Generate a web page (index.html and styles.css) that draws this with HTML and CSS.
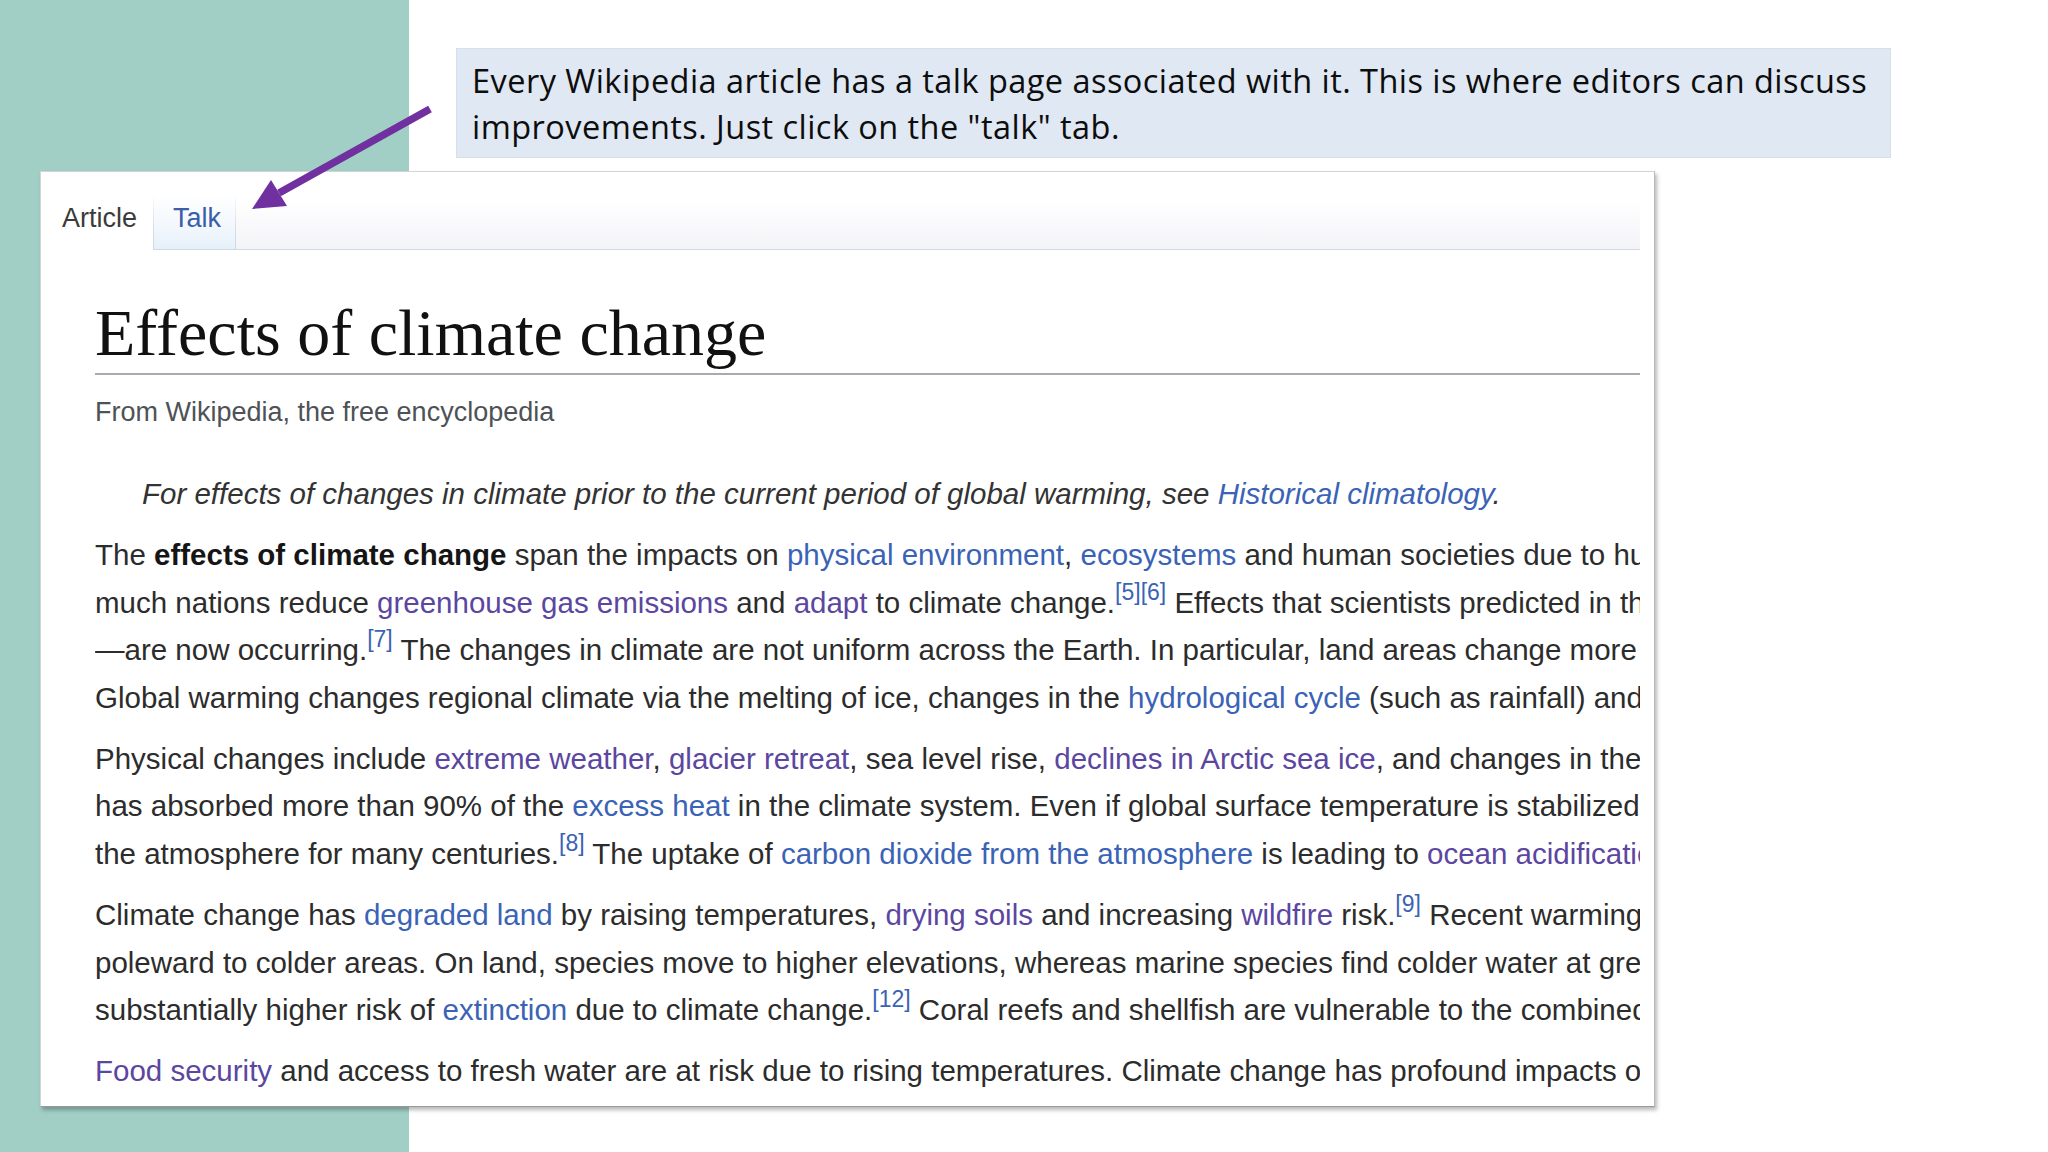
FILE: index.html
```html
<!DOCTYPE html>
<html lang="en">
<head>
<meta charset="utf-8">
<title>Talk pages</title>
<link rel="stylesheet" href="styles.css">
</head>
<body>
<div class="slide">
  <div class="callout">
    <p class="callout-text">Every Wikipedia article has a talk page associated with it. This is where editors can discuss<br>improvements. Just click on the "talk" tab.</p>
  </div>

  <div class="shot">
    <div class="tabs">
      <span class="tab tab-article">Article</span>
      <span class="tab tab-talk">Talk</span>
      <span class="tab-fill"></span>
    </div>
    <div class="content">
      <h1 class="title">Effects of climate change</h1>
      <div class="sitesub">From Wikipedia, the free encyclopedia</div>
      <div class="hatnote">For effects of changes in climate prior to the current period of global warming, see <a class="lk">Historical climatology</a>.</div>

      <p class="para">
        <span class="ln">The <b>effects of climate change</b> span the impacts on <a class="lk">physical environment</a>, <a class="lk">ecosystems</a> and human societies due to human-caused climate change. The future</span>
        <span class="ln">much nations reduce <a class="vl">greenhouse gas emissions</a> and <a class="vl">adapt</a> to climate change.<sup class="ref">[5]</sup><sup class="ref">[6]</sup> Effects that scientists predicted in the past—loss of sea ice,</span>
        <span class="ln">—are now occurring.<sup class="ref">[7]</sup> The changes in climate are not uniform across the Earth. In particular, land areas change more quickly</span>
        <span class="ln">Global warming changes regional climate via the melting of ice, changes in the <a class="lk">hydrological cycle</a> (such as rainfall) and changes</span>
      </p>

      <p class="para">
        <span class="ln">Physical changes include <a class="vl">extreme weather</a>, <a class="vl">glacier retreat</a>, sea level rise, <a class="vl">declines in Arctic sea ice</a>, and changes in the timing</span>
        <span class="ln">has absorbed more than 90% of the <a class="lk">excess heat</a> in the climate system. Even if global surface temperature is stabilized, sea</span>
        <span class="ln">the atmosphere for many centuries.<sup class="ref">[8]</sup> The uptake of <a class="lk">carbon dioxide from the atmosphere</a> is leading to <a class="vl">ocean acidification</a>.</span>
      </p>

      <p class="para">
        <span class="ln">Climate change has <a class="lk">degraded land</a> by raising temperatures, <a class="vl">drying soils</a> and increasing <a class="vl">wildfire</a> risk.<sup class="ref">[9]</sup> Recent warming has</span>
        <span class="ln">poleward to colder areas. On land, species move to higher elevations, whereas marine species find colder water at greater depths.</span>
        <span class="ln">substantially higher risk of <a class="lk">extinction</a> due to climate change.<sup class="ref">[12]</sup> Coral reefs and shellfish are vulnerable to the combined effects</span>
      </p>

      <p class="para">
        <span class="ln"><a class="vl">Food security</a> and access to fresh water are at risk due to rising temperatures. Climate change has profound impacts on</span>
      </p>
    </div>
  </div>

  <svg class="arrow" width="2048" height="1152" viewBox="0 0 2048 1152" aria-hidden="true">
    <line x1="430" y1="109" x2="279" y2="193" stroke="#7030a0" stroke-width="7.5" stroke-linecap="butt"/>
    <polygon points="252,209 271,180 287,206" fill="#7030a0"/>
  </svg>
</div>
</body>
</html>
```

FILE: styles.css
```css
html, body {
  margin: 0;
  padding: 0;
}

body {
  width: 2048px;
  height: 1152px;
  overflow: hidden;
  font-family: "Liberation Sans", Arial, sans-serif;
  background: linear-gradient(to right, #a1cfc6 0, #a1cfc6 409px, #ffffff 409px, #ffffff 100%);
}

.slide {
  position: relative;
  width: 2048px;
  height: 1152px;
  padding-top: 48px;
  box-sizing: border-box;
  display: flex;
  flex-direction: column;
  align-items: flex-start;
}

/* ---------- callout ---------- */
.callout {
  margin-left: 456px;
  width: 1435px;
  height: 110px;
  box-sizing: border-box;
  background: #dfe8f3;
  border: 1px solid #d6e0eb;
  padding: 9px 0 0 15px;
}

.callout-text {
  margin: 0;
  font-family: "Open Sans", "Liberation Sans", sans-serif;
  font-size: 32.5px;
  letter-spacing: 0.45px;
  line-height: 46px;
  color: #0d0d0d;
  white-space: nowrap;
}

/* ---------- wikipedia screenshot ---------- */
.shot {
  margin-top: 13px;
  margin-left: 40px;
  width: 1615px;
  height: 936px;
  box-sizing: border-box;
  background: #ffffff;
  border: 1px solid #d4d4d4;
  border-right-color: #b9b9b9;
  border-bottom-color: #9a9a9a;
  box-shadow: 2px 3px 4px rgba(0, 0, 0, 0.28);
  overflow: hidden;
  display: flex;
  flex-direction: column;
}

.tabs {
  height: 78px;
  margin: 0 14px 0 10px;
  display: flex;
  align-items: flex-end;
  font-size: 27px;
}

.tab {
  display: block;
  height: 55px;
  box-sizing: border-box;
  line-height: 46px;
  white-space: nowrap;
}

.tab-article {
  padding: 0 16px 0 11px;
  color: #3b3b3b;
}

.tab-talk {
  padding: 0 14px 0 19px;
  color: #3a5ea8;
  background: linear-gradient(to bottom, #ffffff 0%, #f3f8fd 55%, #e6f0fa 100%);
  border-style: solid;
  border-width: 0 1px 1px 1px;
  border-image: linear-gradient(to bottom, rgba(200, 214, 230, 0) 0%, #d3deea 60%, #cfd9e5 100%) 1;
}

.tab-fill {
  flex: 1;
  height: 50px;
  box-sizing: border-box;
  background: linear-gradient(to bottom, #ffffff 0%, #f7f7fa 70%, #f3f4f8 100%);
  border-bottom: 1px solid #d3d8e2;
}

.content {
  margin: 0 14px 0 54px;
  overflow: hidden;
  color: #2c2c2c;
  font-size: 29.5px;
}

.title {
  margin: 43px 0 0 0;
  font-family: "Liberation Serif", Georgia, "Times New Roman", serif;
  font-weight: normal;
  font-size: 66px;
  line-height: 80px;
  color: #111111;
  border-bottom: 2px solid #a7abb0;
  white-space: nowrap;
}

.sitesub {
  margin-top: 19px;
  font-size: 27px;
  line-height: 36px;
  color: #4e5256;
  white-space: nowrap;
}

.hatnote {
  margin-top: 40px;
  padding-left: 47px;
  font-style: italic;
  line-height: 47.4px;
  color: #333333;
  white-space: nowrap;
}

.para {
  margin: 14px 0 0 0;
  line-height: 47.4px;
}

.ln {
  display: block;
  white-space: nowrap;
}

.ln b {
  color: #151515;
}

.lk {
  color: #3a63b5;
  text-decoration: none;
}

.vl {
  color: #5b46a0;
  text-decoration: none;
}

.ref {
  font-size: 0.78em;
  line-height: 0;
  vertical-align: 0.55em;
  color: #3a63b5;
}

.arrow {
  position: absolute;
  left: 0;
  top: 0;
  pointer-events: none;
}
```
